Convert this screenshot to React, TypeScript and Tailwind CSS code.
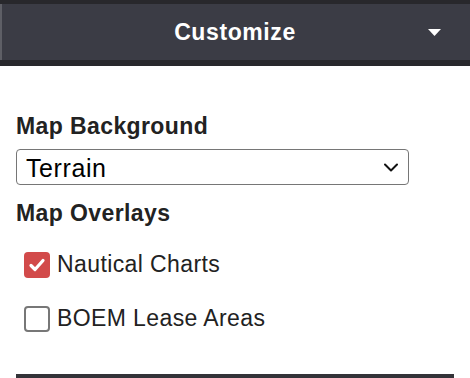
import React from "react";

type OverlayProps = {
  label: string;
  checked: boolean;
};

function Overlay(props: OverlayProps) {
  return (
    <label className="flex h-[26px] flex-row items-center gap-[7px] pl-2">
      {/* box */}
      {props.checked ? (
        <span className="flex h-[26px] w-[26px] items-center justify-center rounded-[4px] bg-[#d24a4a]">
          <svg width="18" height="18" viewBox="0 0 18 18" fill="none">
            <path d="M3 9.5 L7 13.5 L15 4.5" stroke="#fff" strokeWidth="3.2" strokeLinecap="round" strokeLinejoin="round" />
          </svg>
        </span>
      ) : (
        <span className="h-[26px] w-[26px] rounded-[4px] border-2 border-[#777] bg-white" />
      )}
      {/* label */}
      <span className="-mt-[3px] text-[23px] leading-[26px] tracking-[0.4px] text-[#222]">{props.label}</span>
    </label>
  );
}

export default function App() {
  return (
    <div className="flex h-[378px] w-[470px] flex-col overflow-hidden bg-white font-['Liberation_Sans',Arial,sans-serif]">
      {/* header */}
      <header className="grid h-[66px] grid-cols-[1fr_auto_1fr] items-center border-t-4 border-b-[6px] border-[#28282c] bg-[#3b3c45] shadow-[inset_2px_0_0_#5e5f66]">
        <div />
        <h1 className="text-[23px] font-bold tracking-[0.6px] text-white">Customize</h1>
        <div className="flex flex-row justify-end pr-[29px]">
          <svg width="13" height="7" viewBox="0 0 13 7">
            <path d="M0 0 H13 L6.5 7 Z" fill="#fff" />
          </svg>
        </div>
      </header>

      <section className="flex flex-col px-4">
        {/* background */}
        <h2 className="mt-[47px] text-[23px] font-bold leading-[26px] tracking-[0.4px] text-[#222]">Map Background</h2>
        <div className="relative mt-[10px] w-[393px]">
          <select
            defaultValue="Terrain"
            className="h-[36px] w-full appearance-none rounded-[4px] border border-[#767676] bg-white pl-[9px] text-[25px] tracking-[0.6px] text-black outline-none"
          >
            <option>Terrain</option>
            <option>Satellite</option>
            <option>Streets</option>
          </select>
          <svg className="pointer-events-none absolute right-[11px] top-[14px]" width="14" height="9" viewBox="0 0 14 9" fill="none">
            <path d="M1 1.5 L7 7.5 L13 1.5" stroke="#111" strokeWidth="2" strokeLinecap="round" strokeLinejoin="round" />
          </svg>
        </div>

        {/* overlays */}
        <h2 className="mt-[15px] text-[23px] font-bold leading-[26px] tracking-[0.4px] text-[#222]">Map Overlays</h2>
        <div className="mt-[26px] flex flex-col gap-[28px]">
          <Overlay label="Nautical Charts" checked />
          <Overlay label="BOEM Lease Areas" checked={false} />
        </div>
      </section>

      <div className="mx-4 mt-auto h-[4px] bg-[#333338]" />
    </div>
  );
}
